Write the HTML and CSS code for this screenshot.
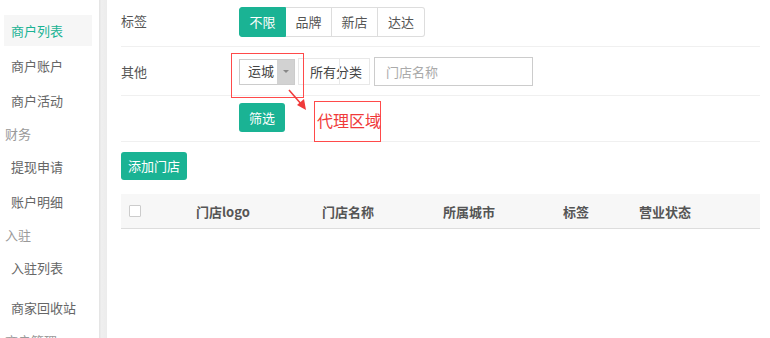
FILE: index.html
```html
<!DOCTYPE html>
<html lang="zh">
<head>
<meta charset="utf-8">
<link rel="stylesheet" href="styles.css">
</head>
<body>
<div class="page">
  <nav class="sidebar">
    <div class="nav-item active">商户列表</div>
    <div class="nav-item">商户账户</div>
    <div class="nav-item">商户活动</div>
    <div class="nav-group">财务</div>
    <div class="nav-item">提现申请</div>
    <div class="nav-item">账户明细</div>
    <div class="nav-group">入驻</div>
    <div class="nav-item">入驻列表</div>
    <div class="nav-item spaced">商家回收站</div>
    <div class="nav-group">商户管理</div>
  </nav>
  <div class="strip"></div>
  <main class="main">
    <div class="filter-row row-tags">
      <div class="label">标签</div>
      <div class="btn-group">
        <span class="seg on">不限</span><span class="seg">品牌</span><span class="seg">新店</span><span class="seg">达达</span>
      </div>
    </div>
    <div class="filter-row row-other">
      <div class="label">其他</div>
      <div class="controls">
        <div class="select"><span class="select-text">运城</span><span class="select-arrow"><span class="tri"></span></span></div>
        <div class="cat"><span class="cat-text">所有分类</span></div>
        <div class="cat-end"></div>
        <div class="input">门店名称</div>
      </div>
    </div>
    <div class="filter-row row-submit">
      <div class="label"></div>
      <span class="btn">筛选</span>
    </div>
    <div class="actions"><span class="btn btn-add">添加门店</span></div>
    <div class="thead">
      <div class="th"><span class="checkbox"></span></div>
      <div class="th">门店logo</div>
      <div class="th">门店名称</div>
      <div class="th">所属城市</div>
      <div class="th">标签</div>
      <div class="th">营业状态</div>
    </div>

    <div class="mark-area"></div>
    <svg class="mark-arrow" width="24" height="24" viewBox="0 0 24 24">
      <line x1="2" y1="2" x2="15" y2="17" stroke="#f03a3a" stroke-width="1.6"/>
      <polygon points="19,22 10,17 17,11" fill="#f03a3a"/>
    </svg>
    <div class="mark-note">代理区域</div>
  </main>
</div>
</body>
</html>
```
FILE: styles.css
```css
* { box-sizing: border-box; }
html, body { margin: 0; padding: 0; background: #fff; }
body {
  font-family: "Noto Sans CJK SC", "Noto Sans", "Liberation Sans", sans-serif;
  font-size: 13px;
  color: #555;
  width: 770px;
  height: 338px;
  overflow: hidden;
}
.page { display: flex; height: 338px; }

.sidebar {
  width: 92px;
  flex: none;
  padding-top: 15px;
  display: flex;
  flex-direction: column;
  gap: 4px;
}
.nav-item {
  height: 31px;
  line-height: 31px;
  margin-left: 4px;
  padding-left: 7px;
  color: #666;
  white-space: nowrap;
}
.nav-item.active { background: #f6f6f6; color: #1ab394; }
.nav-item.spaced { margin-top: 5px; }
.nav-group {
  height: 27px;
  line-height: 27px;
  padding-left: 5px;
  color: #9a9a9a;
  white-space: nowrap;
}

.strip {
  width: 8px;
  flex: none;
  margin-left: 7px;
  background: linear-gradient(to right, #e2e2e2, #efefef 30%, #ececec);
}

.main {
  position: relative;
  margin-left: 14px;
  width: 639px;
  flex: none;
}

.filter-row {
  display: flex;
  align-items: center;
  border-bottom: 1px solid #f0f0f0;
}
.label { width: 118px; flex: none; color: #555; }
.row-tags { height: 47px; padding-top: 7px; align-items: flex-start; }
.row-tags .label { line-height: 28px; }
.row-other { height: 49px; padding-top: 1px; }
.row-submit { height: 46px; padding-bottom: 2px; }

.btn-group { display: flex; }
.seg {
  height: 30px;
  line-height: 28px;
  width: 46px;
  text-align: center;
  border: 1px solid #ddd;
  border-left: none;
  color: #555;
  background: #fff;
}
.seg:first-child { border: 1px solid #1ab394; border-radius: 3px 0 0 3px; width: 47px; }
.seg:last-child { border-radius: 0 3px 3px 0; width: 47px; }
.seg.on { background: #1ab394; color: #fff; }

.controls { display: flex; align-items: center; }
.select {
  display: flex;
  width: 56px;
  height: 26px;
  border: 1px solid #ccc;
  background: #fff;
}
.select-text { flex: 1; line-height: 22px; padding-left: 8px; color: #444; }
.select-arrow {
  width: 17px;
  background: #d2d2d2;
  display: flex;
  align-items: center;
  justify-content: center;
}
.tri {
  width: 0; height: 0;
  border-left: 3px solid transparent;
  border-right: 3px solid transparent;
  border-top: 3px solid #888;
}
.cat {
  margin-left: 3px;
  width: 42px;
  height: 27px;
  border: 1px solid #e8e8e8;
  border-right: none;
  line-height: 25px;
  padding-left: 11px;
  white-space: nowrap;
  overflow: visible;
  color: #444;
}
.cat-end {
  width: 31px;
  height: 27px;
  border: 1px solid #e8e8e8;
  margin-left: -1px;
}
.input {
  margin-left: 4px;
  width: 159px;
  height: 29px;
  border: 1px solid #ccc;
  line-height: 27px;
  padding-left: 11px;
  color: #aaa;
}

.btn {
  display: inline-block;
  height: 29px;
  line-height: 29px;
  padding: 0 10px;
  background: #1ab394;
  color: #fff;
  border-radius: 3px;
  white-space: nowrap;
}
.actions { padding-top: 10px; height: 38px; }
.btn-add { height: 28px; line-height: 28px; padding: 0 7px; }

.thead {
  margin-top: 14px;
  height: 35px;
  background: #f7f7f7;
  border-bottom: 1px solid #ddd;
  display: grid;
  grid-template-columns: 75px 126px 121px 120px 76px 1fr;
  align-items: center;
  font-weight: bold;
  color: #555;
}
.th:first-child { padding-left: 8px; display: flex; }
.checkbox {
  width: 12px;
  height: 12px;
  border: 1px solid #ccc;
  background: #fff;
  border-radius: 1px;
}

.mark-area {
  position: absolute;
  z-index: 2;
  left: 110px; top: 53px; width: 73px; height: 45px;
  border: 1px solid #ff4a4a;
}
.mark-note {
  position: absolute;
  z-index: 2;
  border: 1px solid #ff4a4a;
  left: 193px; top: 101px; width: 67px; height: 41px;
  color: #f03a3a;
  font-size: 16px;
  line-height: 36px;
  padding-left: 2px;
  white-space: nowrap;
}
.mark-arrow { position: absolute; left: 166px; top: 88px; z-index: 2; }
```
